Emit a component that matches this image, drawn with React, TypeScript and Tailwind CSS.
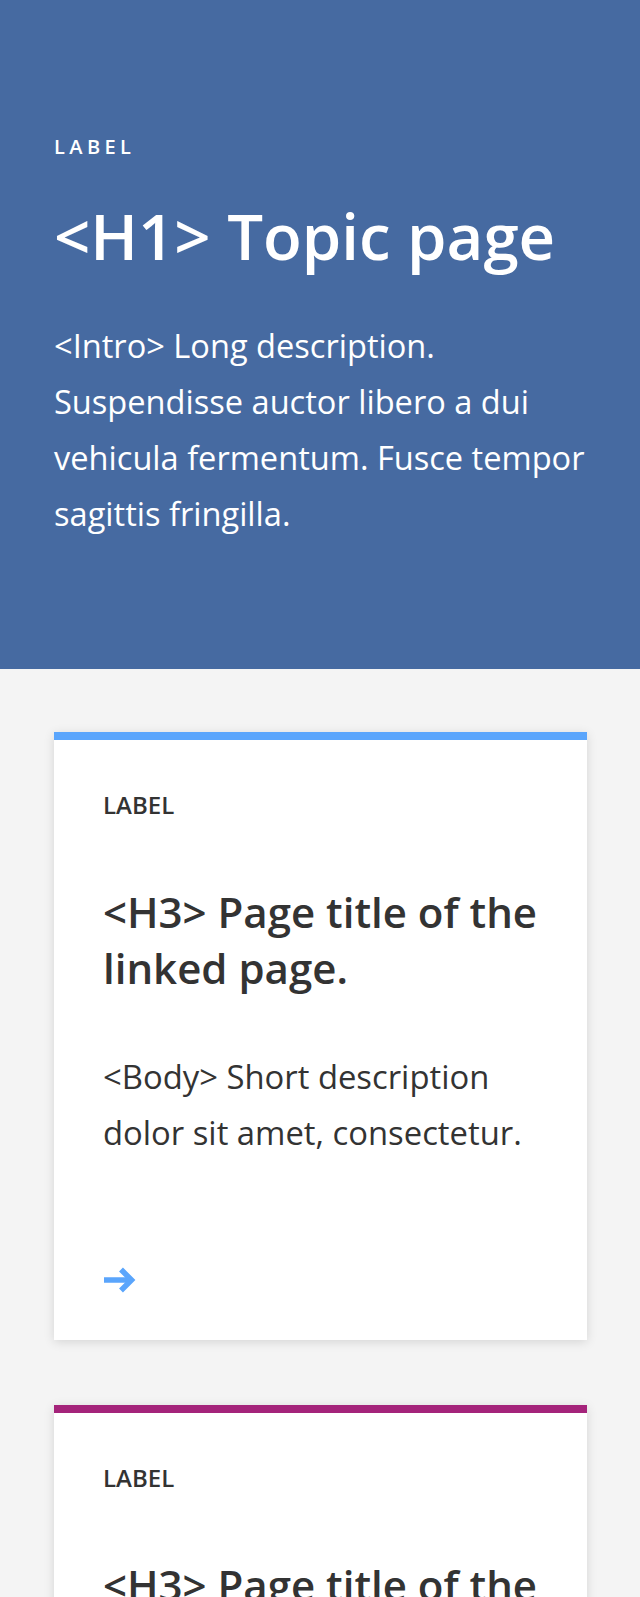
import React from 'react';

type Card = {
  id: number;
  label: string;
  title: string;
  body: string;
  accent: string;
};

const cards: Card[] = [
  {
    id: 1,
    label: 'LABEL',
    title: '<H3> Page title of the linked page.',
    body: '<Body> Short description dolor sit amet, consectetur.',
    accent: 'border-[#5aa5fc]',
  },
  {
    id: 2,
    label: 'LABEL',
    title: '<H3> Page title of the linked page.',
    body: '<Body> Short description dolor sit amet, consectetur.',
    accent: 'border-[#a4237a]',
  },
];

function ArrowRight() {
  return (
    <svg width="32" height="30" viewBox="0 0 32 30" fill="none" className="block">
      <path d="M0 15 H27" stroke="#5aa5fc" strokeWidth="5.5" />
      <path d="M17 4.5 L27.5 15 L17 25.5" stroke="#5aa5fc" strokeWidth="5.5" strokeLinejoin="miter" />
    </svg>
  );
}

function LinkCard({ card }: { card: Card }) {
  return (
    <a
      href="#"
      className={`block bg-white border-t-8 ${card.accent} shadow-[0_2px_10px_rgba(0,0,0,0.13)] pl-[49px] pr-[36px] pt-[49px] pb-[45px] text-[#333]`}
    >
      <span className="block text-[24px] leading-[32px] font-semibold">{card.label}</span>
      <h3 className="mt-[63px] text-[42px] leading-[56px] font-semibold">{card.title}</h3>
      <p className="mt-[53px] text-[32.8px] leading-[56px]">{card.body}</p>
      <div className="mt-[104px] pl-[1px]">
        <ArrowRight />
      </div>
    </a>
  );
}

export default function App() {
  return (
    <div className="min-h-screen bg-[#f4f4f4] font-['Open_Sans',sans-serif]">
      <header className="bg-[#466aa1] pl-[54px] pr-[36px] pt-[134px] pb-[127px] text-white">
        <span className="block text-[20px] leading-[26px] font-semibold tracking-[0.22em]">LABEL</span>
        <h1 className="mt-[36px] text-[63.5px] leading-[80px] font-semibold">&lt;H1&gt; Topic page</h1>
        <p className="mt-[42px] text-[32.6px] leading-[56px]">
          &lt;Intro&gt; Long description. Suspendisse auctor libero a dui vehicula fermentum. Fusce tempor sagittis fringilla.
        </p>
      </header>

      <main className="pl-[54px] pr-[53px] pt-[63px] pb-[64px] flex flex-col gap-[65px]">
        {cards.map((card) => (
          <LinkCard key={card.id} card={card} />
        ))}
      </main>
    </div>
  );
}
